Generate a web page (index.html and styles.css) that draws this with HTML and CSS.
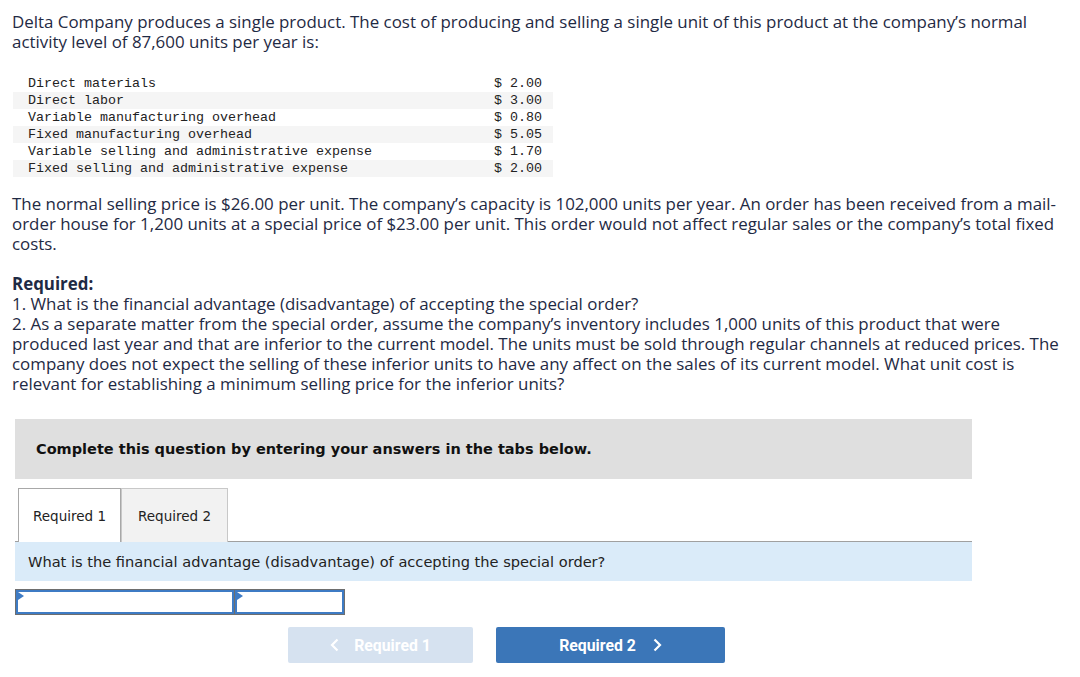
FILE: index.html
```html
<!DOCTYPE html>
<html>
<head>
<meta charset="utf-8">
<link rel="stylesheet" href="styles.css">
</head>
<body>
<div class="page">
  <p class="txt">Delta Company produces a single product. The cost of producing and selling a single unit of this product at the company’s normal activity level of 87,600 units per year is:</p>
  <table class="costs">
    <tr><td class="lbl">Direct materials</td><td class="val">$ 2.00</td></tr>
    <tr class="alt"><td class="lbl">Direct labor</td><td class="val">$ 3.00</td></tr>
    <tr><td class="lbl">Variable manufacturing overhead</td><td class="val">$ 0.80</td></tr>
    <tr class="alt"><td class="lbl">Fixed manufacturing overhead</td><td class="val">$ 5.05</td></tr>
    <tr><td class="lbl">Variable selling and administrative expense</td><td class="val">$ 1.70</td></tr>
    <tr class="alt"><td class="lbl">Fixed selling and administrative expense</td><td class="val">$ 2.00</td></tr>
  </table>
  <p class="txt p2">The normal selling price is $26.00 per unit. The company’s capacity is 102,000 units per year. An order has been received from a mail-order house for 1,200 units at a special price of $23.00 per unit. This order would not affect regular sales or the company’s total fixed costs.</p>
  <div class="txt req">
    <div class="req-h">Required:</div>
    <div>1. What is the financial advantage (disadvantage) of accepting the special order?</div>
    <div>2. As a separate matter from the special order, assume the company’s inventory includes 1,000 units of this product that were produced last year and that are inferior to the current model. The units must be sold through regular channels at reduced prices. The company does not expect the selling of these inferior units to have any affect on the sales of its current model. What unit cost is relevant for establishing a minimum selling price for the inferior units?</div>
  </div>
  <div class="panel">Complete this question by entering your answers in the tabs below.</div>
  <div class="tabs">
    <div class="tab active">Required 1</div>
    <div class="tab">Required 2</div>
  </div>
  <div class="qbar">What is the financial advantage (disadvantage) of accepting the special order?</div>
  <div class="inputs">
    <div class="inp wide"><span class="tri"></span></div>
    <div class="inp narrow"><span class="tri"></span></div>
  </div>
  <div class="nav">
    <div class="btn prev"><svg class="chev" width="9" height="14" viewBox="0 0 9 14"><path d="M7.5 1.5 L2 7 L7.5 12.5" fill="none" stroke="#fff" stroke-width="2.2"/></svg>Required 1</div>
    <div class="btn next">Required 2<svg class="chev" width="9" height="14" viewBox="0 0 9 14"><path d="M1.5 1.5 L7 7 L1.5 12.5" fill="none" stroke="#fff" stroke-width="2.2"/></svg></div>
  </div>
</div>
</body>
</html>
```
FILE: styles.css
```css
html, body { margin: 0; padding: 0; background: #fff; }
.page { padding: 12px 12px 0 12px; }
.txt {
  font-family: "Open Sans", "Noto Sans", sans-serif;
  font-size: 16.9px;
  line-height: 20px;
  color: #1f2a44;
  margin: 0;
}
.costs {
  margin: 23px 0 0 1px;
  border-collapse: collapse;
  width: 540px;
  font-family: "Liberation Mono", monospace;
  font-size: 13.33px;
  color: #222;
}
.costs td { height: 17px; padding: 0; line-height: 17px; }
.costs .lbl { padding-left: 15px; }
.costs .val { text-align: right; padding-right: 11px; }
.costs .alt td { background: #f5f5f5; }
.p2 { margin-top: 17px; }
.req { margin-top: 20px; }
.req-h { font-weight: bold; }
.panel {
  margin: 25px 0 0 3px;
  width: 936px;
  height: 60px;
  padding-left: 21px;
  background: #dfdfdf;
  display: flex;
  align-items: center;
  font-family: "DejaVu Sans", Verdana, sans-serif;
  font-weight: bold;
  font-size: 14.5px;
  color: #111;
}
.tabs { display: flex; margin: 9px 0 0 6px; }
.tab {
  box-sizing: border-box;
  display: flex;
  align-items: center;
  justify-content: center;
  font-family: "DejaVu Sans", Tahoma, sans-serif;
  font-size: 13.5px;
  color: #222;
  border: 1px solid #c8c8c8;
  border-bottom: none;
  background: #f2f2f2;
  width: 107px;
  margin-bottom: -1px;
  height: 54px;
}
.tab.active {
  width: 103px;
  background: #fff;
  border-color: #a8a8a8;
  position: relative;
  z-index: 1;
}
.qbar {
  margin-left: 3px;
  width: 944px;
  height: 39px;
  padding-left: 13px;
  border-top: 1px solid #a0a0a0;
  background: #daebf9;
  display: flex;
  align-items: center;
  font-family: "DejaVu Sans", Verdana, sans-serif;
  font-size: 14.6px;
  color: #222;
}
.inputs { display: flex; margin: 8px 0 0 3px; }
.inp {
  position: relative;
  height: 26px;
  box-sizing: border-box;
  border: 1px solid #6e6e6e;
  box-shadow: inset 0 0 0 2px #3e7bc4;
  background: #fff;
}
.inp.wide { width: 220px; }
.inp.narrow { width: 111px; margin-left: -1px; }
.tri {
  position: absolute;
  left: 2px;
  top: 2px;
  width: 0;
  height: 0;
  border-top: 4px solid transparent;
  border-bottom: 4px solid transparent;
  border-left: 6px solid #3e7bc4;
}
.nav { display: flex; gap: 23px; margin: 12px 0 0 276px; }
.btn {
  height: 36px;
  border-radius: 2px;
  display: flex;
  align-items: center;
  justify-content: center;
  font-family: Roboto, "Liberation Sans", sans-serif;
  font-weight: bold;
  font-size: 15.8px;
  color: #fff;
}
.prev { width: 185px; background: #d6e2f0; }
.next { width: 229px; background: #3b76b8; }
.prev .chev { margin-right: 15px; }
.next .chev { margin-left: 17px; }
```
